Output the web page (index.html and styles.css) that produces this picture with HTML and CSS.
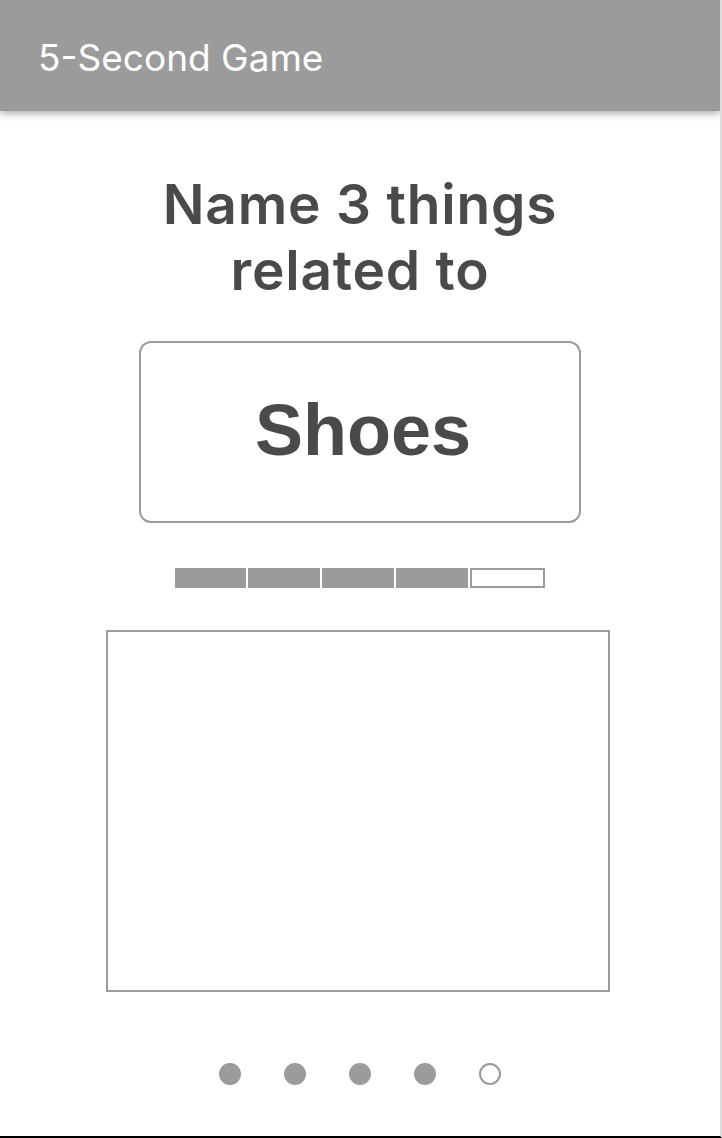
FILE: index.html
```html
<!DOCTYPE html>
<html lang="en">
<head>
<meta charset="utf-8">
<title>5-Second Game</title>
<link rel="stylesheet" href="styles.css">
</head>
<body>
<div class="device">
  <header class="appbar">
    <h1 class="appbar-title">5-Second Game</h1>
  </header>
  <main class="content">
    <h2 class="prompt">Name 3 things<br>related to</h2>
    <div class="topic-card"><span class="topic">Shoes</span></div>
    <div class="timer">
      <div class="seg seg-filled"></div>
      <div class="seg seg-filled"></div>
      <div class="seg seg-filled"></div>
      <div class="seg seg-filled"></div>
      <div class="seg seg-empty"></div>
    </div>
    <div class="answer-box"></div>
    <div class="dots">
      <span class="dot dot-filled"></span>
      <span class="dot dot-filled"></span>
      <span class="dot dot-filled"></span>
      <span class="dot dot-filled"></span>
      <span class="dot dot-empty"></span>
    </div>
  </main>
</div>
</body>
</html>
```
FILE: styles.css
```css
html, body {
  margin: 0;
  padding: 0;
  background: #fff;
}

.device {
  width: 720px;
  height: 1136px;
  border-right: 2px solid #dcdcdc;
  border-bottom: 2px solid #000;
  background: #fff;
  overflow: hidden;
  box-sizing: content-box;
}

.appbar {
  height: 111px;
  background: #9b9b9b;
  box-shadow: 0 3px 7px rgba(0, 0, 0, 0.3);
  display: flex;
  align-items: center;
  padding-left: 38px;
  position: relative;
  z-index: 1;
}

.appbar-title {
  margin: 0;
  font-family: Inter, "Liberation Sans", sans-serif;
  font-weight: 400;
  font-size: 37px;
  color: #fff;
  padding-top: 3px;
}

.content {
  display: flex;
  flex-direction: column;
  align-items: center;
}

.prompt {
  margin: 60px 0 0;
  font-family: Inter, "Liberation Sans", sans-serif;
  font-weight: 600;
  font-size: 55px;
  line-height: 66px;
  letter-spacing: 0.8px;
  color: #4a4a4a;
  text-align: center;
}

.topic-card {
  margin-top: 38px;
  width: 442px;
  height: 182px;
  box-sizing: border-box;
  border: 2px solid #9b9b9b;
  border-radius: 12px;
  display: flex;
  align-items: center;
  justify-content: center;
  padding: 0 0 4px 6px;
}

.topic {
  font-family: "Liberation Sans", Arial, sans-serif;
  font-weight: 700;
  font-size: 72px;
  color: #4a4a4a;
}

.timer {
  margin-top: 45px;
  width: 371px;
  height: 20px;
  display: flex;
  gap: 2px;
}

.seg {
  flex: 1;
  box-sizing: border-box;
}

.seg-filled {
  background: #9b9b9b;
}

.seg-empty {
  background: #fff;
  border: 2px solid #9b9b9b;
}

.answer-box {
  margin-top: 42px;
  margin-right: 4px;
  width: 504px;
  height: 362px;
  box-sizing: border-box;
  border: 2px solid #9b9b9b;
}

.dots {
  margin-top: 71px;
  display: flex;
  gap: 43px;
}

.dot {
  width: 22px;
  height: 22px;
  border-radius: 50%;
  box-sizing: border-box;
}

.dot-filled {
  background: #9b9b9b;
}

.dot-empty {
  border: 2px solid #9b9b9b;
  background: #fff;
}
```
